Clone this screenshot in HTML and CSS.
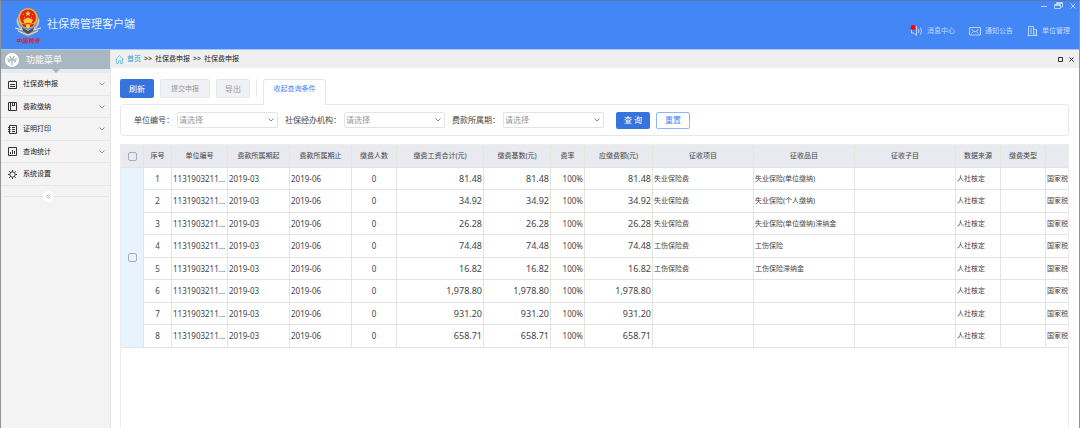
FILE: index.html
```html
<!DOCTYPE html>
<html lang="zh-CN">
<head>
    <meta charset="UTF-8">
    <meta name="viewport" content="width=device-width, initial-scale=1.0">
    <title>社保费管理客户端</title>
    <link rel="stylesheet" href="styles.css">
</head>
<body>

<div class="window">
    <header class="topbar">
        <div class="brand">
            <div class="logo">
                <svg width="28" height="29" viewBox="0 0 28 29">
                    <path d="M3 9 Q1 17 7 21 L14 25 L21 21 Q27 17 25 9 L22 18 L14 22 L6 18 Z" fill="#b9c3cc"/>
                    <path d="M1 20 L9 22 L14 25 L19 22 L27 20 L21 26 L14 29 L7 26 Z" fill="#8794a3"/>
                    <path d="M1 20 L9 22 L14 25 L19 22 L27 20 M4 23 L14 27 L24 23" fill="none" stroke="#e4e9ee" stroke-width="1"/>
                    <path d="M8 19 L14 23 L20 19 L19 23 L14 26 L9 23 Z" fill="#46525f"/>
                    <circle cx="14" cy="10" r="10" fill="#f0b429"/>
                    <circle cx="14" cy="9.500" r="8" fill="#e2231a"/>
                    <path d="M14 2.500 L14.800 4.700 L17 4.700 L15.200 6 L15.900 8.200 L14 6.900 L12.100 8.200 L12.800 6 L11 4.700 L13.200 4.700 Z" fill="#ffd84a"/>
                    <path d="M9 6h1v1H9zM18 6h1v1h-1zM10 9h1v1h-1zM17 9h1v1h-1z" fill="#ffd84a"/>
                    <path d="M9 12 L14 9.500 L19 12 V13 H18 V15 H10 V13 H9 Z" fill="#ffc935"/>
                    <path d="M7 15 Q14 18 21 15 L19 19 Q14 21 9 19 Z" fill="#d8281c" stroke="#f5c13b" stroke-width="0.700"/>
                    <circle cx="14" cy="18" r="2" fill="#ffd84a"/>
                </svg>
                <span class="logo-text">中国税务</span>
            </div>
            <h1>社保费管理客户端</h1>
        </div>
        <div class="topbar-right">
            <div class="window-controls">
                <button type="button" aria-label="最小化">
                    <svg width="8" height="8" viewBox="0 0 8 8"><path d="M1 4.500H7" /></svg>
                </button>
                <button type="button" aria-label="还原">
                    <svg width="9" height="8" viewBox="0 0 9 8"><path d="M2.500 2.500V.5H8.500V5H6.500M.5 2.500H6.500V6.500H.5ZM.5 3.500H6.500M2.500 1.500H8.500" /></svg>
                </button>
                <button type="button" aria-label="关闭">
                    <svg width="8" height="8" viewBox="0 0 8 8"><path d="M1.500 1.500L6.500 6.500M6.500 1.500L1.500 6.500" /></svg>
                </button>
            </div>
            <nav class="top-links">
                <a href="#">
                    <svg width="13" height="12" viewBox="0 0 13 12">
                        <path d="M1.500 4.500V8H3.500L6.500 10.500V1.500L3.500 4.500Z M8.500 4Q9.500 6 8.500 8M10.500 2.500Q12.500 6 10.500 9.500"/>
                        <circle class="dot" cx="3" cy="2.500" r="2.500"/>
                    </svg>
                    消息中心
                </a>
                <a href="#">
                    <svg width="12" height="12" viewBox="0 0 12 12"><path d="M.5 2.500H11.500V10H.5ZM2.500 4.500L6 7L9.500 4.500M2.500 8.500L4.500 6.500M9.500 8.500L7.500 6.500"/></svg>
                    通知公告
                </a>
                <a href="#">
                    <svg width="11" height="12" viewBox="0 0 11 12"><path d="M1.500 10V1.500H6.500V10M6.500 4.500H9.500V10M.5 10.500H10.500M3 4H5M3 6H5M3 8H5M8 6.500V7.500M8 8.500V9.500"/></svg>
                    单位管理
                </a>
            </nav>
        </div>
    </header>

    <div class="layout">
        <aside class="sidebar">
            <div class="menu-title">
                <svg width="14" height="14" viewBox="0 0 14 14">
                    <circle cx="7" cy="7" r="7" fill="#fff"/>
                    <path d="M7 12V6.500L4.500 3M7 6.500L9.500 3M4 7H10M3 5Q3 9 5 9M11 5Q11 9 9 9" fill="none" stroke="#a9b8c0" stroke-width="1.300"/>
                </svg>
                <h2>功能菜单</h2>
            </div>
            <nav class="menu">
                <a href="#">
                    <svg class="icon" width="9" height="9" viewBox="0 0 9 9"><path d="M.5 1.500H8.500V8.500H.5ZM2.500 .5V1.500M4.500 .5V1.500M6.500 .5V1.500M2 4.500H7M2 6.500H7"/></svg>
                    <span>社保费申报</span>
                    <svg class="arrow" width="6" height="4" viewBox="0 0 6 4"><path d="M.5 .5L3 3L5.500 .5"/></svg>
                </a>
                <a href="#">
                    <svg class="icon" width="9" height="9" viewBox="0 0 9 9"><path d="M.5 .5H8.500V8.500H.5ZM2.500 .5V8.500M4.500 .5V4L5.500 3L6.500 4V.5"/></svg>
                    <span>费款缴纳</span>
                    <svg class="arrow" width="6" height="4" viewBox="0 0 6 4"><path d="M.5 .5L3 3L5.500 .5"/></svg>
                </a>
                <a href="#">
                    <svg class="icon" width="9" height="9" viewBox="0 0 9 9"><path d="M1.500 .5H8.500V8.500H1.500ZM0 2.500H2.500M0 4.500H2.500M0 6.500H2.500M4 2.500H7M4 4.500H7M4 6.500H7"/></svg>
                    <span>证明打印</span>
                    <svg class="arrow" width="6" height="4" viewBox="0 0 6 4"><path d="M.5 .5L3 3L5.500 .5"/></svg>
                </a>
                <a href="#">
                    <svg class="icon" width="9" height="9" viewBox="0 0 9 9"><path d="M.5 .5H8.500V8.500H.5ZM2.500 5V7M4.500 3V7M6.500 4V7"/></svg>
                    <span>查询统计</span>
                    <svg class="arrow" width="6" height="4" viewBox="0 0 6 4"><path d="M.5 .5L3 3L5.500 .5"/></svg>
                </a>
                <a href="#">
                    <svg class="icon" width="9" height="9" viewBox="0 0 9 9"><circle cx="4.500" cy="4.500" r="2.700"/><path d="M4.500 0V1.500M4.500 7.500V9M0 4.500H1.500M7.500 4.500H9M1.200 1.200L2.400 2.400M6.600 6.600L7.800 7.800M7.800 1.200L6.600 2.400M2.400 6.600L1.200 7.800"/></svg>
                    <span>系统设置</span>
                </a>
            </nav>
            <div class="collapse">
                <button type="button" aria-label="收起菜单">
                    <svg width="5" height="5" viewBox="0 0 5 5"><path d="M2.500 .5L.5 2.500L2.500 4.500M4.500 .5L2.500 2.500L4.500 4.500"/></svg>
                </button>
            </div>
        </aside>

        <main class="main">
            <div class="crumbs">
                <svg width="9" height="9" viewBox="0 0 9 9"><path d="M.5 4.500L4.500 .7L8.500 4.500M1.500 4V8.500H3.500V5.500H5.500V8.500H7.500V4"/></svg>
                <a href="#">首页</a>
                <span>&gt;&gt;</span>
                <span>社保费申报</span>
                <span>&gt;&gt;</span>
                <span>社保费申报</span>
                <div class="tab-controls">
                    <button type="button" aria-label="最大化">
                        <svg width="5" height="5" viewBox="0 0 5 5"><path d="M.5 .5H4.500V4.500H.5Z"/></svg>
                    </button>
                    <button type="button" aria-label="关闭标签">
                        <svg width="5" height="5" viewBox="0 0 5 5"><path d="M.5 .5L4.500 4.500M4.500 .5L.5 4.500"/></svg>
                    </button>
                </div>
            </div>

            <div class="content">
                <div class="toolbar">
                    <button type="button" class="btn primary">刷新</button>
                    <button type="button" class="btn wide" disabled>提交申报</button>
                    <button type="button" class="btn" disabled>导出</button>
                    <span class="divider"></span>
                    <button type="button" class="tab">收起查询条件</button>
                </div>

                <form class="filters">
                    <div class="field">
                        <label for="unit">单位编号：</label>
                        <select id="unit"><option>请选择</option></select>
                    </div>
                    <div class="field">
                        <label for="agency">社保经办机构：</label>
                        <select id="agency"><option>请选择</option></select>
                    </div>
                    <div class="field">
                        <label for="period">费款所属期：</label>
                        <select id="period"><option>请选择</option></select>
                    </div>
                    <div class="actions">
                        <button type="button" class="btn small primary">查 询</button>
                        <button type="reset" class="btn small outline">重置</button>
                    </div>
                </form>

                <div class="grid">
                    <table>
                        <colgroup>
                            <col class="w-check"><col class="w-index"><col class="w-unit">
                            <col class="w-date"><col class="w-date"><col class="w-short">
                            <col class="w-wage"><col class="w-base"><col class="w-rate"><col class="w-due">
                            <col class="w-item"><col class="w-item"><col class="w-item">
                            <col class="w-short"><col class="w-short"><col>
                        </colgroup>
                        <thead>
                            <tr>
                                <th><input type="checkbox" aria-label="全选"></th>
                                <th>序号</th>
                                <th>单位编号</th>
                                <th>费款所属期起</th>
                                <th>费款所属期止</th>
                                <th>缴费人数</th>
                                <th>缴费工资合计(元)</th>
                                <th>缴费基数(元)</th>
                                <th>费率</th>
                                <th>应缴费额(元)</th>
                                <th>征收项目</th>
                                <th>征收品目</th>
                                <th>征收子目</th>
                                <th>数据来源</th>
                                <th>缴费类型</th>
                                <th></th>
                            </tr>
                        </thead>
                        <tbody>
                            <tr>
                                <td class="check" rowspan="8"><input type="checkbox" aria-label="选择该组"></td>
                                <td class="num center">1</td><td class="num">1131903211...</td><td class="num">2019-03</td><td class="num">2019-06</td><td class="num center">0</td>
                                <td class="money">81.48</td><td class="money">81.48</td><td class="num right">100%</td><td class="money">81.48</td>
                                <td>失业保险费</td><td>失业保险(单位缴纳)</td><td></td><td>人社核定</td><td></td><td>国家税</td>
                            </tr>
                            <tr>
                                <td class="num center">2</td><td class="num">1131903211...</td><td class="num">2019-03</td><td class="num">2019-06</td><td class="num center">0</td>
                                <td class="money">34.92</td><td class="money">34.92</td><td class="num right">100%</td><td class="money">34.92</td>
                                <td>失业保险费</td><td>失业保险(个人缴纳)</td><td></td><td>人社核定</td><td></td><td>国家税</td>
                            </tr>
                            <tr>
                                <td class="num center">3</td><td class="num">1131903211...</td><td class="num">2019-03</td><td class="num">2019-06</td><td class="num center">0</td>
                                <td class="money">26.28</td><td class="money">26.28</td><td class="num right">100%</td><td class="money">26.28</td>
                                <td>失业保险费</td><td>失业保险(单位缴纳)滞纳金</td><td></td><td>人社核定</td><td></td><td>国家税</td>
                            </tr>
                            <tr>
                                <td class="num center">4</td><td class="num">1131903211...</td><td class="num">2019-03</td><td class="num">2019-06</td><td class="num center">0</td>
                                <td class="money">74.48</td><td class="money">74.48</td><td class="num right">100%</td><td class="money">74.48</td>
                                <td>工伤保险费</td><td>工伤保险</td><td></td><td>人社核定</td><td></td><td>国家税</td>
                            </tr>
                            <tr>
                                <td class="num center">5</td><td class="num">1131903211...</td><td class="num">2019-03</td><td class="num">2019-06</td><td class="num center">0</td>
                                <td class="money">16.82</td><td class="money">16.82</td><td class="num right">100%</td><td class="money">16.82</td>
                                <td>工伤保险费</td><td>工伤保险滞纳金</td><td></td><td>人社核定</td><td></td><td>国家税</td>
                            </tr>
                            <tr>
                                <td class="num center">6</td><td class="num">1131903211...</td><td class="num">2019-03</td><td class="num">2019-06</td><td class="num center">0</td>
                                <td class="money">1,978.80</td><td class="money">1,978.80</td><td class="num right">100%</td><td class="money">1,978.80</td>
                                <td></td><td></td><td></td><td>人社核定</td><td></td><td>国家税</td>
                            </tr>
                            <tr>
                                <td class="num center">7</td><td class="num">1131903211...</td><td class="num">2019-03</td><td class="num">2019-06</td><td class="num center">0</td>
                                <td class="money">931.20</td><td class="money">931.20</td><td class="num right">100%</td><td class="money">931.20</td>
                                <td></td><td></td><td></td><td>人社核定</td><td></td><td>国家税</td>
                            </tr>
                            <tr>
                                <td class="num center">8</td><td class="num">1131903211...</td><td class="num">2019-03</td><td class="num">2019-06</td><td class="num center">0</td>
                                <td class="money">658.71</td><td class="money">658.71</td><td class="num right">100%</td><td class="money">658.71</td>
                                <td></td><td></td><td></td><td>人社核定</td><td></td><td>国家税</td>
                            </tr>
                        </tbody>
                    </table>
                </div>
            </div>
        </main>
    </div>
</div>

</body>
</html>
```
FILE: styles.css
```css
* {
    box-sizing: border-box;
}

body {
    margin: 0;
    font-family: "Noto Sans", "Noto Sans CJK SC", sans-serif;
    font-size: 7px;
    line-height: 12px;
    color: #444;
}

button,
select,
input {
    margin: 0;
    padding: 0;
    font-family: inherit;
    font-size: inherit;
    line-height: inherit;
}

button {
    border: none;
    background: none;
    cursor: pointer;
}

a {
    color: inherit;
    text-decoration: none;
}

svg {
    display: block;
    flex: none;
}

.window {
    display: flex;
    flex-direction: column;
    min-height: 100vh;
    border: 1px solid #8f9296;
    border-top-color: #5a78ad;
    border-bottom: none;
    background-color: #fff;
}

/* top bar */
.topbar {
    display: flex;
    justify-content: space-between;
    height: 49px;
    background-color: #4287f5;
    border-bottom: 1px solid #a9c8fb;
}

.brand {
    display: flex;
    gap: 5px;
    padding: 7px 0 0 13px;
}

.logo {
    display: flex;
    flex-direction: column;
    align-items: center;
}

.logo-text {
    font-size: 6px;
    font-weight: bold;
    font-style: italic;
    line-height: 8px;
    color: #c8283c;
}

.brand h1 {
    margin: 8px 0 0;
    font-size: 11px;
    font-weight: normal;
    line-height: 16px;
    color: #e8f1ff;
}

.topbar-right {
    display: flex;
    flex-direction: column;
    justify-content: space-between;
    align-items: flex-end;
    padding: 1px 2px 12px 0;
}

.window-controls,
.top-links {
    display: flex;
    align-items: center;
}

.window-controls {
    gap: 6px;
}

.topbar-right svg {
    fill: none;
    stroke: #b9d3fd;
    stroke-width: 1;
}

.topbar-right .dot {
    fill: #f00;
    stroke: none;
}

.top-links {
    gap: 14px;
    padding-right: 7px;
    color: #c3daff;
}

.top-links a {
    display: flex;
    align-items: center;
    gap: 4px;
}

.layout {
    flex: 1;
    display: flex;
}

/* left menu */
.sidebar {
    width: 110px;
    flex: none;
    background-color: #f3f3f3;
    border-right: 1px solid #e6e6e6;
}

.menu-title {
    position: relative;
    display: flex;
    align-items: center;
    gap: 7px;
    height: 19px;
    padding-left: 4px;
    background-color: #a9b8c0;
    color: #fff;
}

.menu-title::after {
    content: "";
    position: absolute;
    top: 100%;
    left: 50%;
    margin-left: -4px;
    border: 4px solid transparent;
    border-top-color: #a9b8c0;
    border-bottom: none;
}

.menu-title h2 {
    margin: 0;
    font-size: 9px;
    font-weight: normal;
}

.menu {
    border-top: 4px solid #e3ebf6;
}

.menu a {
    display: flex;
    align-items: center;
    gap: 6px;
    height: 22px;
    padding: 0 5px 0 7px;
    border-bottom: 1px solid #e6e6e6;
    color: #222;
}

.menu a:nth-child(odd) {
    height: 23px;
}

.menu span {
    flex: 1;
}

.menu svg {
    fill: none;
    stroke: #333;
}

.menu .arrow {
    stroke: #999;
}

.collapse {
    display: flex;
    align-items: center;
    padding: 5px 3px;
}

.collapse::before,
.collapse::after {
    content: "";
    width: 39px;
    height: 1px;
    background-color: #e6e6e6;
}

.collapse::after {
    flex: 1;
}

.collapse button {
    display: flex;
    align-items: center;
    justify-content: center;
    width: 11px;
    height: 11px;
    border-radius: 50%;
    background-color: #fff;
}

.collapse svg {
    fill: none;
    stroke: #99a;
    stroke-width: 0.7;
}

/* main area */
.main {
    flex: 1;
    min-width: 0;
    display: flex;
    flex-direction: column;
}

.crumbs {
    display: flex;
    align-items: center;
    gap: 3px;
    height: 18px;
    padding: 0 5px 0 4px;
    background-color: #efefef;
    color: #222;
}

.crumbs a {
    color: #2f9fd6;
}

.crumbs svg {
    fill: none;
    stroke: #6db9e0;
    stroke-width: 0.8;
}

.tab-controls {
    display: flex;
    gap: 6px;
    margin-left: auto;
}

.tab-controls svg {
    stroke: #333;
    stroke-width: 1;
}

.content {
    flex: 1;
    display: flex;
    flex-direction: column;
    padding: 11px 10px 0 9px;
}

.toolbar {
    display: flex;
    gap: 6px;
}

.btn {
    width: 34px;
    height: 19px;
    border-radius: 2px;
    background-color: #3574dc;
    color: #fff;
    font-size: 8px;
}

.btn:disabled {
    border: 1px solid #e6e7ea;
    background-color: #f0f1f5;
    color: #999;
    cursor: default;
}

.btn.wide {
    width: 50px;
    font-size: 7px;
}

.btn.small {
    height: 17px;
}

.btn.outline {
    border: 1px solid #8fb5f8;
    background-color: #fff;
    color: #4287f5;
}

.divider {
    width: 1px;
    height: 18px;
    background-color: #e8e8e8;
}

/* the tab covers the top border of the filter box */
.tab {
    z-index: 1;
    width: 63px;
    height: 26px;
    margin-bottom: -1px;
    padding-bottom: 7px;
    border: 1px solid #e6e6e6;
    border-bottom: none;
    border-radius: 3px 3px 0 0;
    background-color: #fff;
    color: #4287f5;
}

.filters {
    display: flex;
    align-items: center;
    gap: 7px;
    height: 32px;
    padding-left: 13px;
    border: 1px solid #e8e8e8;
    border-radius: 3px;
    font-size: 8px;
}

.field {
    display: flex;
    align-items: center;
    gap: 3px;
}

.field select {
    width: 101px;
    height: 16px;
    padding-left: 1px;
    appearance: none;
    border: 1px solid #e3e3e3;
    border-radius: 2px;
    background: #fff url("data:image/svg+xml,%3Csvg xmlns='http://www.w3.org/2000/svg' width='6' height='4'%3E%3Cpath d='M.5 .5L3 3L5.500 .5' fill='none' stroke='%23888'/%3E%3C/svg%3E") no-repeat right 3px center;
    color: #999;
}

.actions {
    display: flex;
    gap: 6px;
    margin-left: 5px;
}

/* data table */
.grid {
    flex: 1;
    margin-top: 8px;
    border: 1px solid #ececec;
    border-bottom: none;
    overflow: hidden;
}

table {
    width: 100%;
    table-layout: fixed;
    border-collapse: separate;
    border-spacing: 0;
}

.w-check { width: 23px; }
.w-index { width: 28px; }
.w-unit { width: 56px; }
.w-date { width: 62px; }
.w-short { width: 45px; }
.w-wage { width: 87px; }
.w-base { width: 67px; }
.w-rate { width: 34px; }
.w-due { width: 68px; }
.w-item { width: 101px; }

th,
td {
    height: 22px;
    padding: 0 1px;
    border-right: 1px solid #e4e4e0;
    border-bottom: 1px solid #e4e4e0;
    text-align: left;
    white-space: nowrap;
}

th:last-child,
td:last-child {
    padding-right: 0;
    border-right: none;
}

th {
    height: 23px;
    padding: 0;
    background-color: #e8eaf0;
    font-weight: normal;
    text-align: center;
}

tbody tr:nth-child(even) td {
    height: 23px;
}

.num {
    font-size: 8px;
}

.money {
    font-size: 9px;
    text-align: right;
}

.center {
    text-align: center;
}

.right {
    text-align: right;
}

.check {
    background-color: #e8f3fe;
    text-align: center;
}

table input {
    display: block;
    width: 9px;
    height: 9px;
    margin: 0 auto;
    appearance: none;
    border: 1px solid #a9adb3;
    border-radius: 2px;
    background-color: transparent;
}
```
